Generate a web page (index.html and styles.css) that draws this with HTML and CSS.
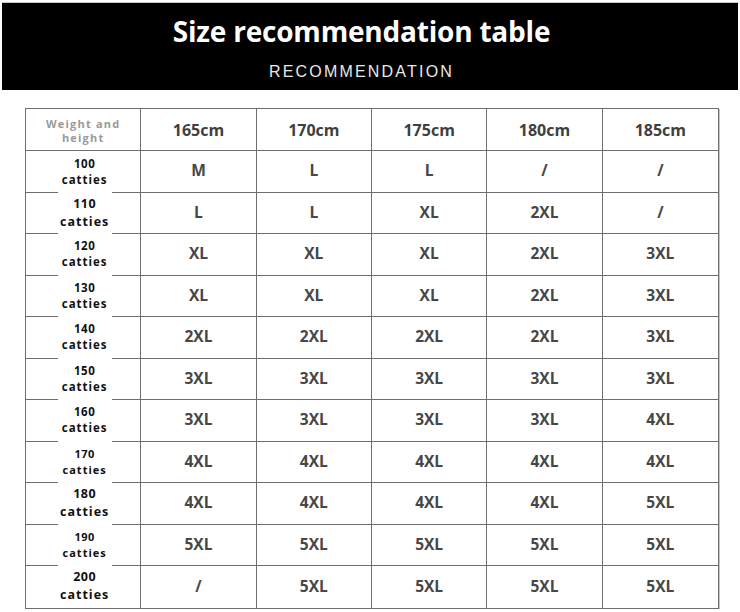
FILE: index.html
```html
<!DOCTYPE html>
<html lang="en">
<head>
<meta charset="utf-8">
<title>Size recommendation table</title>
<link rel="stylesheet" href="styles.css">
</head>
<body>
<header class="banner">
  <h1 class="title">Size recommendation table</h1>
  <p class="subtitle">RECOMMENDATION</p>
</header>
<main class="size-table">
  <div class="cell corner">Weight and<br>height</div>
  <div class="cell head">165cm</div>
  <div class="cell head">170cm</div>
  <div class="cell head">175cm</div>
  <div class="cell head">180cm</div>
  <div class="cell head">185cm</div>

  <div class="cell row-label first"><span class="label"><b class="num">100</b><b class="unit">catties</b></span></div>
  <div class="cell val">M</div><div class="cell val">L</div><div class="cell val">L</div><div class="cell val">/</div><div class="cell val">/</div>

  <div class="cell row-label"><span class="label big"><b class="num">110</b><b class="unit">catties</b></span></div>
  <div class="cell val">L</div><div class="cell val">L</div><div class="cell val">XL</div><div class="cell val">2XL</div><div class="cell val">/</div>

  <div class="cell row-label"><span class="label"><b class="num">120</b><b class="unit">catties</b></span></div>
  <div class="cell val">XL</div><div class="cell val">XL</div><div class="cell val">XL</div><div class="cell val">2XL</div><div class="cell val">3XL</div>

  <div class="cell row-label"><span class="label"><b class="num">130</b><b class="unit">catties</b></span></div>
  <div class="cell val">XL</div><div class="cell val">XL</div><div class="cell val">XL</div><div class="cell val">2XL</div><div class="cell val">3XL</div>

  <div class="cell row-label"><span class="label"><b class="num">140</b><b class="unit">catties</b></span></div>
  <div class="cell val">2XL</div><div class="cell val">2XL</div><div class="cell val">2XL</div><div class="cell val">2XL</div><div class="cell val">3XL</div>

  <div class="cell row-label"><span class="label"><b class="num">150</b><b class="unit">catties</b></span></div>
  <div class="cell val">3XL</div><div class="cell val">3XL</div><div class="cell val">3XL</div><div class="cell val">3XL</div><div class="cell val">3XL</div>

  <div class="cell row-label"><span class="label"><b class="num">160</b><b class="unit">catties</b></span></div>
  <div class="cell val">3XL</div><div class="cell val">3XL</div><div class="cell val">3XL</div><div class="cell val">3XL</div><div class="cell val">4XL</div>

  <div class="cell row-label"><span class="label small"><b class="num">170</b><b class="unit">catties</b></span></div>
  <div class="cell val">4XL</div><div class="cell val">4XL</div><div class="cell val">4XL</div><div class="cell val">4XL</div><div class="cell val">4XL</div>

  <div class="cell row-label"><span class="label big"><b class="num">180</b><b class="unit">catties</b></span></div>
  <div class="cell val">4XL</div><div class="cell val">4XL</div><div class="cell val">4XL</div><div class="cell val">4XL</div><div class="cell val">5XL</div>

  <div class="cell row-label"><span class="label small"><b class="num">190</b><b class="unit">catties</b></span></div>
  <div class="cell val">5XL</div><div class="cell val">5XL</div><div class="cell val">5XL</div><div class="cell val">5XL</div><div class="cell val">5XL</div>

  <div class="cell row-label last"><span class="label big"><b class="num">200</b><b class="unit">catties</b></span></div>
  <div class="cell val last">/</div><div class="cell val last">5XL</div><div class="cell val last">5XL</div><div class="cell val last">5XL</div><div class="cell val last">5XL</div>
</main>
</body>
</html>
```

FILE: styles.css
```css
html, body {
  margin: 0;
  padding: 0;
  background: #ffffff;
}

body {
  padding-top: 2px;
  font-family: "Open Sans", "Liberation Sans", sans-serif;
}

.banner {
  margin: 0 2px;
  height: 88px;
  padding-right: 17px;
  background: #000000;
  border-top: 1px solid #c8c8c8;
  box-sizing: border-box;
  display: flex;
  flex-direction: column;
  align-items: center;
}

.title {
  margin: 8px 0 0;
  font-family: "Open Sans", sans-serif;
  font-weight: 700;
  font-size: 28px;
  line-height: 40px;
  color: #ffffff;
  letter-spacing: -0.2px;
}

.subtitle {
  margin: 11px 0 0;
  padding-left: 0;
  font-family: "Liberation Sans", Arial, sans-serif;
  font-size: 16px;
  line-height: 20px;
  letter-spacing: 2.2px;
  color: #e8e8e8;
}

.size-table {
  margin: 18px 0 0 25px;
  width: 694px;
  display: grid;
  grid-template-columns: repeat(6, 1fr);
  grid-template-rows: 42px repeat(11, 41.5px);
  border: 1px solid #6e6e6e;
  box-shadow: 1px 1px 0 #c4c4c4;
  box-sizing: border-box;
  background: #ffffff;
}

.cell {
  display: flex;
  align-items: center;
  justify-content: center;
  border-right: 1px solid #6e6e6e;
  border-bottom: 1px solid #6e6e6e;
  color: #444444;
  font-weight: 700;
  font-size: 15px;
}

.cell:nth-child(6n) {
  border-right: none;
}

.cell.last {
  border-bottom: none;
}

.corner {
  flex-direction: column;
  text-align: center;
  font-size: 11px;
  line-height: 14px;
  letter-spacing: 1.2px;
  color: #9a9a9a;
  padding-top: 2px;
}

.head {
  font-weight: 700;
  font-size: 16px;
  color: #404040;
  padding-top: 1px;
}

.val {
  font-weight: 700;
  font-size: 15.5px;
  color: #474747;
  padding-bottom: 2px;
}

.row-label {
  align-items: stretch;
}

.label {
  width: 54px;
  margin: -1px 0 -1px 3px;
  background: #ffffff;
  display: flex;
  flex-direction: column;
  align-items: center;
  justify-content: center;
  color: #111111;
}

.row-label.first .label {
  margin-top: 0;
}

.row-label.last .label {
  margin-bottom: 0;
}

.num {
  font-size: 11.5px;
  line-height: 16px;
  font-weight: 700;
  letter-spacing: 0.5px;
}

.unit {
  font-size: 11.5px;
  line-height: 16px;
  font-weight: 700;
  letter-spacing: 1px;
}

.label.big .num {
  font-size: 12.5px;
  line-height: 18px;
}

.label.big .unit {
  font-size: 12.5px;
  line-height: 18px;
}

.label.small .num,
.label.small .unit {
  font-size: 11px;
  line-height: 16px;
}
```
